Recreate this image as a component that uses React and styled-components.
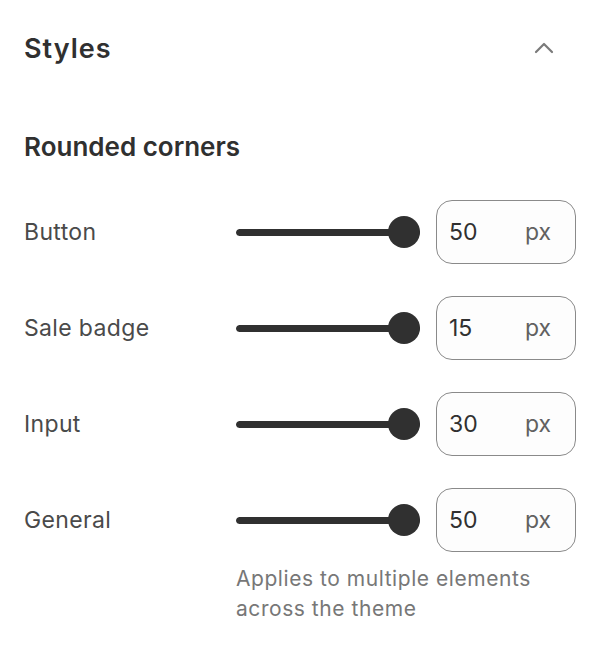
import React, { useState } from "react";
import styled, { createGlobalStyle } from "styled-components";

const GlobalStyle = createGlobalStyle`
  body {
    margin: 0;
    background: #ffffff;
    font-family: "Inter", "Noto Sans", sans-serif;
    color: #303030;
  }
`;

const Panel = styled.div`
  width: 600px;
  box-sizing: border-box;
  padding: 26px 24px 24px 24px;
`;

const Header = styled.div`
  display: flex;
  align-items: center;
  justify-content: space-between;
  height: 44px;
`;

const Title = styled.h2`
  margin: 0;
  font-size: 27px;
  font-weight: 600;
  color: #303030;
  letter-spacing: 1px;
`;

const ToggleBtn = styled.button`
  display: flex;
  align-items: center;
  justify-content: center;
  width: 40px;
  height: 40px;
  margin-right: 12px;
  border: none;
  background: none;
  padding: 0;
  cursor: pointer;
`;

const Section = styled.div`
  margin-top: 60px;
`;

const SectionTitle = styled.h3`
  margin: 0 0 36px 0;
  font-size: 26px;
  font-weight: 600;
  color: #303030;
  line-height: 34px;
`;

const Rows = styled.div`
  display: flex;
  flex-direction: column;
  gap: 32px;
`;

const Row = styled.div`
  display: grid;
  grid-template-columns: 196px 1fr 140px;
  align-items: center;
  column-gap: 16px;
`;

const Label = styled.div`
  font-size: 23px;
  letter-spacing: 0.35px;
  color: #4a4a4a;
`;

const SliderBox = styled.div`
  position: relative;
  height: 32px;
  display: flex;
  align-items: center;
`;

const Track = styled.div`
  width: 100%;
  height: 7px;
  border-radius: 4px;
  background: #e3e3e3;
  overflow: hidden;
`;

const Fill = styled.div`
  height: 100%;
  background: #303030;
  border-radius: 4px;
`;

const Thumb = styled.div`
  position: absolute;
  top: 0;
  width: 32px;
  height: 32px;
  border-radius: 50%;
  background: #303030;
`;

const ValueBox = styled.label`
  display: flex;
  align-items: center;
  height: 64px;
  box-sizing: border-box;
  padding: 0 24px 0 12px;
  border: 1px solid #8a8a8a;
  border-radius: 16px;
  background: #fdfdfd;
`;

const ValueInput = styled.input`
  flex: 1;
  min-width: 0;
  border: none;
  outline: none;
  background: transparent;
  padding: 0;
  font-family: inherit;
  font-size: 23px;
  color: #303030;
`;

const Unit = styled.span`
  font-size: 23px;
  color: #616161;
`;

const Help = styled.div`
  margin: 12px 0 0 212px;
  font-size: 21px;
  letter-spacing: 0.55px;
  line-height: 30px;
  color: #777777;
`;

const settings = [
  { id: "button", label: "Button", value: 50 },
  { id: "badge", label: "Sale badge", value: 15 },
  { id: "input", label: "Input", value: 30 },
  { id: "general", label: "General", value: 50 },
];

function Chevron() {
  return (
    <svg width="24" height="24" viewBox="0 0 24 24" fill="none">
      <path
        d="M4 16L12 8L20 16"
        stroke="#7a7a7a"
        strokeWidth="2.2"
        strokeLinecap="round"
        strokeLinejoin="round"
      />
    </svg>
  );
}

function App() {
  const [values, setValues] = useState(settings.map((s) => s.value));

  const changeValue = (idx, v) => {
    const next = [...values];
    next[idx] = v;
    setValues(next);
  };

  return (
    <>
      <GlobalStyle />
      <Panel>
        <Header>
          <Title>Styles</Title>
          <ToggleBtn aria-label="Collapse">
            <Chevron />
          </ToggleBtn>
        </Header>
        <Section>
          <SectionTitle>Rounded corners</SectionTitle>
          <Rows>
            {settings.map((s, idx) => {
              // all sliders sit at the max end
              const pct = 100;
              return (
                <Row key={s.id}>
                  <Label>{s.label}</Label>
                  <SliderBox>
                    <Track>
                      <Fill style={{ width: `${pct}%` }} />
                    </Track>
                    <Thumb style={{ left: `calc(${pct}% - 32px)` }} />
                  </SliderBox>
                  <ValueBox>
                    <ValueInput
                      value={values[idx]}
                      onChange={(e) => changeValue(idx, e.target.value)}
                    />
                    <Unit>px</Unit>
                  </ValueBox>
                </Row>
              );
            })}
          </Rows>
          <Help>
            Applies to multiple elements
            <br />
            across the theme
          </Help>
        </Section>
      </Panel>
    </>
  );
}

export default App;
